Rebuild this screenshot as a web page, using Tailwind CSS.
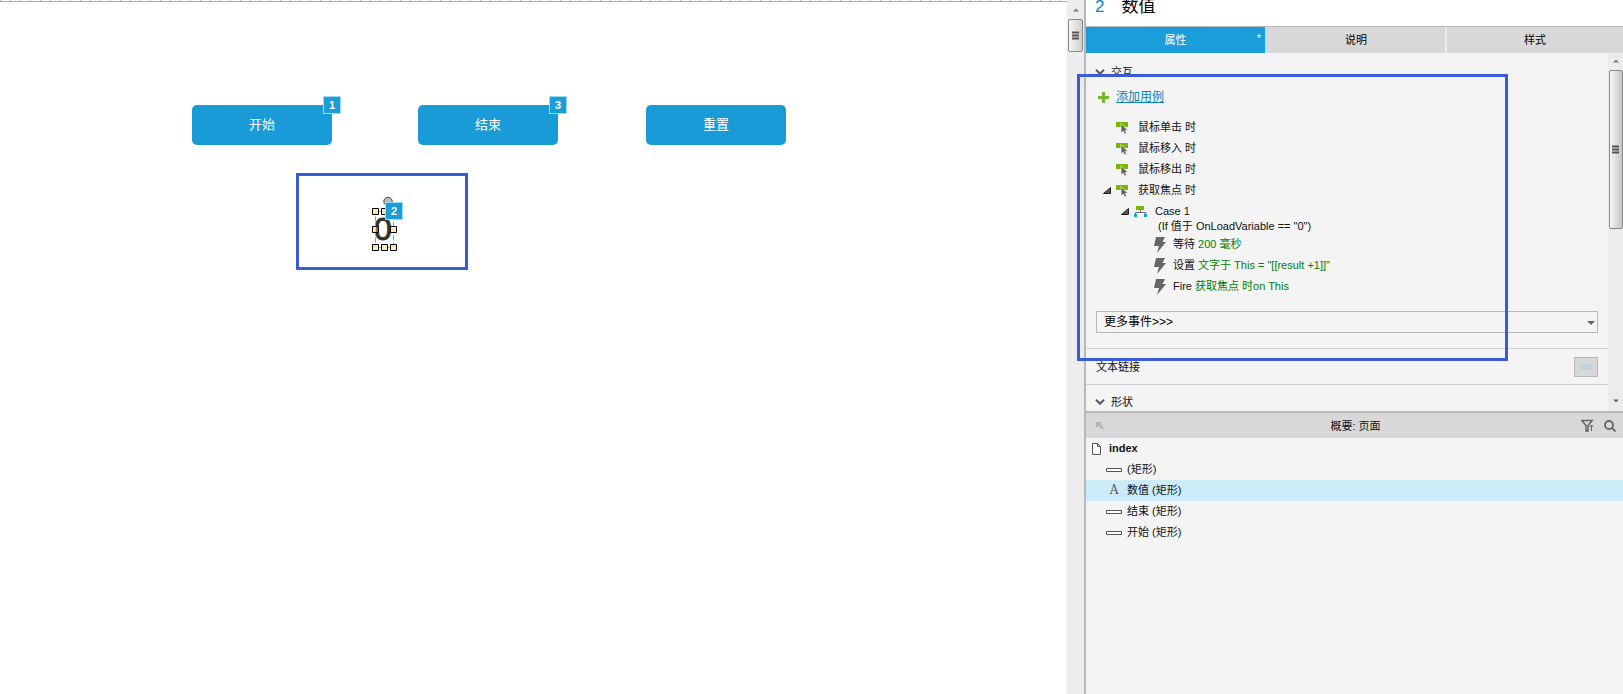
<!DOCTYPE html>
<html lang="zh-CN">
<head>
<meta charset="utf-8">
<title>index</title>
<script src="https://cdn.jsdelivr.net/npm/@tailwindcss/browser@4"></script>
</head>
<body class="flex h-screen overflow-hidden bg-white font-['Liberation_Sans','Noto_Sans_CJK_SC',sans-serif] text-[11px] leading-[14px] text-[#111]">
<svg class="hidden" aria-hidden="true">
  <symbol id="event" viewBox="0 0 12 12"><path d="M0 0h12v5H0z" fill="#76b900"/><path d="M5 1.500v9.500l2.200-1.800L8.500 12l2-.8L9.300 8.500H12z" fill="#666" stroke="#f4f4f4" stroke-width=".7"/></symbol>
  <symbol id="bolt" viewBox="0 0 12 16"><path d="M2 0h9L8.500 5H12L3 16l2-7H0z" fill="#666"/></symbol>
  <symbol id="open" viewBox="0 0 8 7"><path d="M7.500 .5v6h-7z" fill="#555" stroke="#222"/></symbol>
  <symbol id="chevron" viewBox="0 0 10 6"><path d="M1 .8l4 4 4-4" fill="none" stroke="#555a62" stroke-width="2"/></symbol>
  <symbol id="rectangle" viewBox="0 0 16 4"><path d="M.5.5h15v3H.5z" fill="#fff" stroke="#555"/></symbol>
  <symbol id="up" viewBox="0 0 8 4"><path d="M4 0l4 4H0z" fill="#777"/></symbol>
  <symbol id="down" viewBox="0 0 8 4"><path d="M0 0h8L4 4z" fill="#666"/></symbol>
</svg>

<main class="relative min-w-0 flex-1 overflow-hidden">
  <div class="h-px bg-[repeating-linear-gradient(to_right,#bbb_0_1px,#fff_1px_10px)]"></div>
  <div class="h-px bg-[#aaa]"></div>

  <button class="absolute left-[192px] top-[105px] h-10 w-[140px] rounded-[5px] bg-[#199bd7] text-[13px] text-white">开始</button>
  <button class="absolute left-[418px] top-[105px] h-10 w-[140px] rounded-[5px] bg-[#199bd7] text-[13px] text-white">结束</button>
  <button class="absolute left-[646px] top-[105px] h-10 w-[140px] rounded-[5px] bg-[#199bd7] text-[13px] text-white">重置</button>
  <span class="absolute left-[323px] top-[96px] grid size-[18px] place-items-center border border-[#9bdcf5] bg-[#1b9dd9] font-bold text-white">1</span>
  <span class="absolute left-[549px] top-[96px] grid size-[18px] place-items-center border border-[#9bdcf5] bg-[#1b9dd9] font-bold text-white">3</span>

  <div class="absolute left-[296px] top-[173px] h-[97px] w-[172px] border-3 border-[#3a5bd6]"></div>
  <span class="absolute left-[373px] top-[212px] w-5 text-center text-[32px] leading-[34px] text-[#333] [-webkit-text-stroke:1px_#333]">0</span>
  <svg class="absolute left-[370px] top-[194px]" width="30" height="60" viewBox="0 0 30 60" aria-hidden="true">
    <circle cx="18" cy="7.500" r="4.200" fill="#bbb" stroke="#444"/>
    <path d="M5.500 17.500h18v36h-18z" fill="none" stroke="#1df01d" stroke-dasharray="5 2"/>
    <g fill="#ffe6b0" fill-opacity=".85" stroke="#000">
      <path d="M2.500 14.500h6v6h-6zM11.500 14.500h6v6h-6zM20.500 14.500h6v6h-6zM20.500 32.500h6v6h-6zM2.500 50.500h6v6h-6zM11.500 50.500h6v6h-6zM20.500 50.500h6v6h-6z"/>
      <path d="M2.500 32.500h6v6h-6z"/>
    </g>
    <path d="M6 33h2v5H6z" fill="#8c6b45"/>
  </svg>
  <span class="absolute left-[385px] top-[202px] grid size-[18px] place-items-center border border-[#9bdcf5] bg-[#1b9dd9] font-bold text-white">2</span>
</main>

<div class="flex w-[17px] shrink-0 flex-col items-center bg-[#ececec] pt-2">
  <svg width="6" height="4" class="mb-[7px]"><use href="#up"/></svg>
  <div class="grid h-[33px] w-[15px] place-items-center rounded-[2px] border border-[#888] bg-linear-to-r from-[#f6f6f6] to-[#cfcfcf]">
    <svg width="7" height="10" viewBox="0 0 7 10"><path d="M0 1.500h7M0 4.500h7M0 7.500h7" stroke="#555" stroke-width="2"/></svg>
  </div>
</div>

<aside class="relative flex w-[539px] shrink-0 flex-col border-l-2 border-[#b8b8b8] bg-[#f4f4f4]">
  <header class="flex h-[27px] shrink-0 items-start gap-[17px] border-b border-[#b8b8b8] bg-white pl-[9px] text-[17px] leading-[14px] text-black">
    <span class="text-[#0a84b5]">2</span><h1>数值</h1>
  </header>
  <div role="tablist" class="grid h-[26px] shrink-0 grid-cols-[181fr_180fr_176fr] bg-[#d8d8d8] text-black">
    <button role="tab" aria-selected="true" class="relative border-r-2 border-[#b5dff2] bg-[#1b9dd9] text-white">属性<span class="absolute right-1 top-1">*</span></button>
    <button role="tab" aria-selected="false" class="border-r-2 border-[#ececec]">说明</button>
    <button role="tab" aria-selected="false">样式</button>
  </div>

  <section class="flex h-[358px] shrink-0">
    <div class="flex min-w-0 flex-1 flex-col overflow-hidden pt-3">
      <h2 class="flex items-center gap-[6px] pl-[9px]"><svg width="10" height="6"><use href="#chevron"/></svg>交互</h2>
      <div class="mt-[10px] flex items-center gap-[7px] pl-3 text-[12px] leading-4">
        <svg width="11" height="11" viewBox="0 0 11 11"><path d="M4 0h3v4h4v3H7v4H4V7H0V4h4z" fill="#76b82a"/></svg>
        <a href="#" class="text-[#0a84b5] underline">添加用例</a>
      </div>
      <ul class="mt-3 leading-[21px]">
        <li class="flex h-[21px] items-center gap-[10px] pl-[30px]"><svg width="12" height="12"><use href="#event"/></svg>鼠标单击 时</li>
        <li class="flex h-[21px] items-center gap-[10px] pl-[30px]"><svg width="12" height="12"><use href="#event"/></svg>鼠标移入 时</li>
        <li class="flex h-[21px] items-center gap-[10px] pl-[30px]"><svg width="12" height="12"><use href="#event"/></svg>鼠标移出 时</li>
        <li>
          <div class="flex h-[21px] items-center pl-[17px]"><svg width="8" height="7" class="mr-[5px]"><use href="#open"/></svg><svg width="12" height="12" class="mr-[10px]"><use href="#event"/></svg>获取焦点 时</div>
          <div class="flex h-[21px] items-center pl-[35px]"><svg width="8" height="7" class="mr-[5px]"><use href="#open"/></svg><svg width="13" height="11" viewBox="0 0 13 11" class="mr-2"><path d="M2 0h8v4H2z" fill="#76b900"/><path d="M6.500 4v2.500M1.500 9V6.500h10V9" fill="none" stroke="#666"/><path d="M0 8h3v3H0zM10 8h3v3h-3z" fill="#1b9dd9"/></svg>Case 1</div>
          <p class="h-3 pl-[72px] leading-[8px]">(If 值于 OnLoadVariable == "0")</p>
          <ul>
            <li class="flex h-[21px] items-center gap-[7px] pl-[68px]"><svg width="12" height="16"><use href="#bolt"/></svg><span>等待 <span class="text-[#008000]">200 毫秒</span></span></li>
            <li class="flex h-[21px] items-center gap-[7px] pl-[68px]"><svg width="12" height="16"><use href="#bolt"/></svg><span>设置 <span class="text-[#008000]">文字于 This = "[[result +1]]"</span></span></li>
            <li class="flex h-[21px] items-center gap-[7px] pl-[68px]"><svg width="12" height="16"><use href="#bolt"/></svg><span>Fire <span class="text-[#008000]">获取焦点 时on This</span></span></li>
          </ul>
        </li>
      </ul>
      <div class="relative mx-[10px] mt-[14px]">
        <select aria-label="更多事件" class="block h-[22px] w-full appearance-none border border-[#b8b8b8] bg-[#f4f4f4] pl-[7px] text-[12px] leading-4 text-black"><option>更多事件&gt;&gt;&gt;</option></select>
        <svg width="8" height="4" class="pointer-events-none absolute right-[3px] top-[10px]"><use href="#down"/></svg>
      </div>
      <div class="mt-[15px] flex h-9 shrink-0 items-center justify-between border-t border-[#d0d0d0] px-[10px]">
        <span>文本链接</span>
        <button aria-label="链接" class="grid h-5 w-6 place-items-center border border-[#b8b8b8] bg-[#d8d8d8]"><svg width="12" height="6" viewBox="0 0 12 6" fill="none" stroke="#b3d3df" stroke-width="1.500"><rect x=".8" y=".8" width="6.200" height="4.400" rx="2.200"/><rect x="5" y=".8" width="6.200" height="4.400" rx="2.200"/></svg></button>
      </div>
      <h2 class="flex shrink-0 items-center gap-[6px] border-t border-[#d0d0d0] pl-[9px] pt-[10px]"><svg width="10" height="6"><use href="#chevron"/></svg>形状</h2>
    </div>
    <div class="flex w-[15px] flex-col items-center bg-[#ececec] pb-2 pt-[6px]">
      <svg width="6" height="4" class="mb-[7px]"><use href="#up"/></svg>
      <div class="grid h-[159px] w-[14px] place-items-center rounded-[2px] border border-[#888] bg-linear-to-r from-[#f6f6f6] to-[#c4c6c8]">
        <svg width="7" height="10" viewBox="0 0 7 10"><path d="M0 1.500h7M0 4.500h7M0 7.500h7" stroke="#555" stroke-width="2"/></svg>
      </div>
      <svg width="6" height="4" class="mt-auto"><use href="#down"/></svg>
    </div>
  </section>

  <section class="flex min-h-0 flex-1 flex-col border-t-2 border-[#b8b8b8]">
    <div class="flex h-[25px] shrink-0 items-center bg-[#d8d8d8] px-[10px]">
      <svg width="8" height="8" viewBox="0 0 8 8"><path d="M0 0h6L4.500 1.500 8 6 6.500 7.500 2 4 0 6z" fill="#b5b5b5"/></svg>
      <h2 class="flex-1 whitespace-pre pl-[26px] text-center">概要: 页面</h2>
      <button aria-label="筛选" class="mr-[10px]"><svg width="13" height="13" viewBox="0 0 13 13" fill="none" stroke="#666"><path d="M.8 1.500h10.400L7 6.500V12H5V6.500z" stroke-width="1.500"/><path d="M10.500 12V6M8.500 8l2-2 2 2"/></svg></button>
      <button aria-label="搜索" class="-mr-[3px]"><svg width="12" height="12" viewBox="0 0 12 12" fill="none" stroke="#666" stroke-width="1.800"><circle cx="5" cy="5" r="4"/><path d="M8 8l3.500 3.500"/></svg></button>
    </div>
    <ul class="leading-[21px]">
      <li class="flex h-[21px] items-center gap-2 pl-[6px] font-bold"><svg width="9" height="12" viewBox="0 0 9 12"><path d="M.5.5h5l3 3v8h-8zM5.500.5v3h3" fill="#fff" stroke="#555"/></svg>index</li>
      <li class="flex h-[21px] items-center gap-[5px] pl-5"><svg width="16" height="4"><use href="#rectangle"/></svg>(矩形)</li>
      <li class="flex h-[21px] items-center gap-[5px] bg-[#cbebf8] pl-5"><span class="w-4 text-center font-['DejaVu_Serif',serif] text-[12px] text-[#555]">A</span>数值 (矩形)</li>
      <li class="flex h-[21px] items-center gap-[5px] pl-5"><svg width="16" height="4"><use href="#rectangle"/></svg>结束 (矩形)</li>
      <li class="flex h-[21px] items-center gap-[5px] pl-5"><svg width="16" height="4"><use href="#rectangle"/></svg>开始 (矩形)</li>
    </ul>
  </section>

  <div class="pointer-events-none absolute -left-[9px] top-[74px] h-[287px] w-[431px] border-3 border-[#3a5bd6]"></div>
</aside>
</body>
</html>
